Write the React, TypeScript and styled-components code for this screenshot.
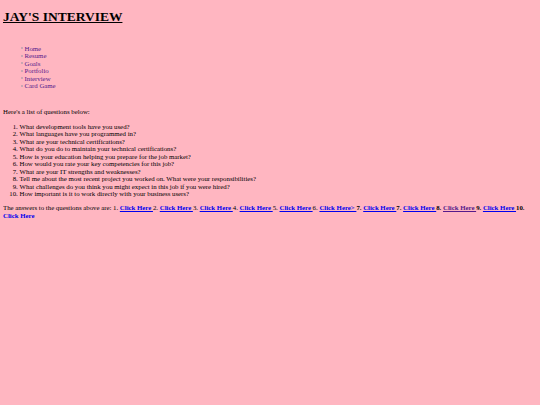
import React from 'react';
import styled, { createGlobalStyle } from 'styled-components';

const GlobalStyle = createGlobalStyle`
  html, body {
    background: #ffb6c1;
  }
  body {
    margin: 3px;
    font-family: "Liberation Serif", "Times New Roman", serif;
    font-size: 6.8px;
    line-height: 7.5px;
    color: #000;
  }
`;

const Title = styled.h1`
  font-size: 13.5px;
  line-height: 15px;
  font-weight: bold;
  text-decoration: underline;
  margin: 6px 0 0;
`;

const Nav = styled.ul`
  margin: 20.5px 0 0;
  padding-left: 17.5px;
  list-style: none;
`;

const NavItem = styled.li`
  &::before {
    content: '';
    display: inline-block;
    width: 2px;
    height: 2px;
    border-radius: 50%;
    background: #b8a0ac;
    margin-right: 2px;
    vertical-align: 1.5px;
  }
`;

const NavLink = styled.a`
  color: #551a8b;
  text-decoration: none;
`;

const Intro = styled.p`
  margin: 18.5px 0 0;
`;

const Questions = styled.ol`
  margin: 7px 0 0;
  padding-left: 16.5px;
`;

const Answers = styled.p`
  margin: 6.5px 0 0;
`;

const AnswerLink = styled.a<{ $visited?: boolean }>`
  color: ${(p) => (p.$visited ? '#551a8b' : '#0000ee')};
  font-weight: bold;
  text-decoration: underline;
  text-decoration-thickness: 1px;
`;

const navItems = ['Home', 'Resume', 'Goals', 'Portfolio', 'Interview', 'Card Game'];

const questions = [
  'What development tools have you used?',
  'What languages have you programmed in?',
  'What are your technical certifications?',
  'What do you do to maintain your technical certifications?',
  'How is your education helping you prepare for the job market?',
  'How would you rate your key competencies for this job?',
  'What are your IT strengths and weaknesses?',
  'Tell me about the most recent project you worked on. What were your responsibilities?',
  'What challenges do you think you might expect in this job if you were hired?',
  'How important is it to work directly with your business users?',
];

export default function App() {
  return (
    <>
      <GlobalStyle />
      <Title>JAY'S INTERVIEW</Title>
      <Nav>
        {navItems.map((item) => (
          <NavItem key={item}>
            <NavLink href="#">{item}</NavLink>
          </NavItem>
        ))}
      </Nav>
      <Intro>Here's a list of questions below:</Intro>
      <Questions>
        {questions.map((q) => (
          <li key={q}>{q}</li>
        ))}
      </Questions>
      <Answers>
        The answers to the questions above are: 1. <AnswerLink href="#">Click Here </AnswerLink>2.{' '}
        <AnswerLink href="#">Click Here </AnswerLink>3. <AnswerLink href="#">Click Here </AnswerLink>4.{' '}
        <AnswerLink href="#">Click Here </AnswerLink>5. <AnswerLink href="#">Click Here </AnswerLink>6.{' '}
        <AnswerLink href="#">Click Here&gt; </AnswerLink>
        <b>
          7. <AnswerLink href="#">Click Here </AnswerLink>7. <AnswerLink href="#">Click Here </AnswerLink>8.{' '}
          <AnswerLink href="#" $visited>Click Here </AnswerLink>9. <AnswerLink href="#">Click Here </AnswerLink>10.{' '}
          <AnswerLink href="#">Click Here</AnswerLink>
        </b>
      </Answers>
    </>
  );
}
